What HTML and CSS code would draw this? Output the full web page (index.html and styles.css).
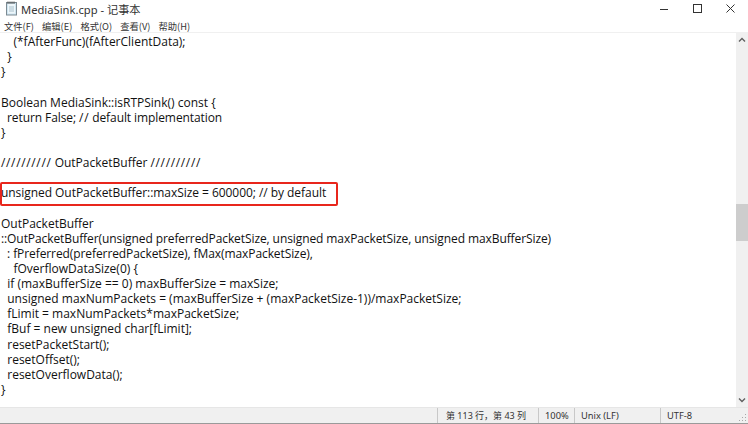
FILE: index.html
```html
<!DOCTYPE html>
<html lang="zh">
<head>
<meta charset="utf-8">
<title>MediaSink.cpp - 记事本</title>
<link rel="stylesheet" href="styles.css">
</head>
<body>
<div class="window">
  <header class="titlebar">
    <svg class="app-icon" width="14" height="15" viewBox="0 0 14 15">
      <rect x="1.5" y="1.5" width="10" height="12.5" fill="#cfe6f2" stroke="#7d8a92"/>
      <rect x="3" y="3" width="7" height="9.5" fill="#eef6fa"/>
      <path d="M3 0.5v2.5M5 0.5v2.5M7 0.5v2.5M9 0.5v2.5" stroke="#555" stroke-width="1"/>
      <path d="M4 6h5M4 8h5M4 10h5" stroke="#a8c0cc" stroke-width="1"/>
    </svg>
    <span class="title">MediaSink.cpp - 记事本</span>
    <div class="controls">
      <svg class="control" width="12" height="12" viewBox="0 0 12 12"><path d="M1 6.5h8" stroke="#333" stroke-width="1"/></svg>
      <svg class="control" width="12" height="12" viewBox="0 0 12 12"><rect x="1.5" y="1.5" width="8" height="8" fill="none" stroke="#333" stroke-width="1"/></svg>
      <svg class="control" width="12" height="12" viewBox="0 0 12 12"><path d="M1.5 1.5l8 8M9.5 1.5l-8 8" stroke="#333" stroke-width="1"/></svg>
    </div>
  </header>
  <nav class="menubar">
    <span>文件(F)</span><span>编辑(E)</span><span>格式(O)</span><span>查看(V)</span><span>帮助(H)</span>
  </nav>
  <main class="editor">
    <pre class="code">    (*fAfterFunc)(fAfterClientData);
  }
}

Boolean MediaSink::isRTPSink() const {
<span class="tight">  return False; <span class="slash">//</span> default implementation</span>
}

<span class="slash">//////////</span> OutPacketBuffer <span class="slash">//////////</span>

<span class="snug">unsigned OutPacketBuffer::maxSize = 600000; // by default</span>

OutPacketBuffer
<span class="tight">::OutPacketBuffer(unsigned preferredPacketSize, unsigned maxPacketSize, unsigned maxBufferSize)</span>
<span class="tight">  : fPreferred(preferredPacketSize), fMax(maxPacketSize),</span>
    fOverflowDataSize(0) {
  if (maxBufferSize == 0) maxBufferSize = maxSize;
  unsigned maxNumPackets = (maxBufferSize + (maxPacketSize-1))/maxPacketSize;
  fLimit = maxNumPackets*maxPacketSize;
  fBuf = new unsigned char[fLimit];
  resetPacketStart();
  resetOffset();
  resetOverflowData();
}</pre>
    <div class="highlight"></div>
    <div class="scrollbar">
      <svg class="arrow" width="12" height="14" viewBox="0 0 12 14"><path d="M3 8.5l3-3 3 3" fill="none" stroke="#606060" stroke-width="1.4"/></svg>
      <div class="track"><div class="thumb"></div></div>
      <svg class="arrow" width="12" height="14" viewBox="0 0 12 14"><path d="M3 5.5l3 3 3-3" fill="none" stroke="#606060" stroke-width="1.4"/></svg>
    </div>
  </main>
  <footer class="statusbar">
    <span class="cell pos">第 113 行，第 43 列</span>
    <span class="cell zoom">100%</span>
    <span class="cell eol">Unix (LF)</span>
    <span class="cell enc">UTF-8</span>
    <svg class="grip" width="12" height="12" viewBox="0 0 12 12"><path d="M9 3h1v1H9zM6 6h1v1H6zM9 6h1v1H9zM3 9h1v1H3zM6 9h1v1H6zM9 9h1v1H9z" fill="#a8a8a8"/></svg>
  </footer>
</div>
</body>
</html>
```
FILE: styles.css
```css
* { box-sizing: border-box; }
html, body { margin: 0; padding: 0; background: #fff; }
body { font-family: "Open Sans", "Noto Sans CJK SC", sans-serif; color: #1a1a1a; }
.window { width: 748px; height: 424px; display: flex; flex-direction: column; overflow: hidden; }
.titlebar { height: 17px; display: flex; align-items: center; padding-left: 5px; font-size: 11.2px; color: #333; flex: none; }
.app-icon { margin-right: 2px; flex: none; }
.title { flex: 1; white-space: nowrap; font-family: "Noto Sans", "Noto Sans CJK SC", sans-serif; padding-top: 1px; }
.controls { display: flex; gap: 21px; padding-right: 11px; }
.control { display: block; }
.menubar { height: 16px; display: flex; padding-left: 4px; gap: 8px; font-size: 9.3px; line-height: 18px; color: #333; flex: none; border-bottom: 1px solid #f0f0f0; font-family: "Noto Sans CJK SC", sans-serif; }
.editor { flex: 1; position: relative; display: flex; min-height: 0; }
.code { flex: 1; margin: 0; padding: 1px 0 0 1px; font-family: "Open Sans", sans-serif; font-size: 12px; line-height: 15.12px; color: #111; overflow: hidden; }
.tight { letter-spacing: -0.09px; }
.snug { letter-spacing: -0.05px; }
.slash { letter-spacing: 0.65px; }
.highlight { position: absolute; left: 0; top: 149px; width: 338px; height: 24px; border: 2px solid #e8261c; border-radius: 2px; }
.scrollbar { width: 12px; background: #f0f0f0; display: flex; flex-direction: column; flex: none; margin-right: 0; }
.arrow { display: block; flex: none; }
.track { flex: 1; padding-top: 157px; }
.thumb { height: 37px; background: #cdcdcd; }
.statusbar { height: 17px; background: #f0f0f0; border-bottom: 1px solid #9a9a9a; border-top: 1px solid #e6e6e6; display: flex; align-items: center; font-size: 9.3px; color: #333; flex: none; position: relative; font-family: "Noto Sans", "Noto Sans CJK SC", sans-serif; padding-left: 437px; }
.cell { height: 100%; border-left: 1px solid #c8c8c8; line-height: 15px; white-space: nowrap; flex: none; }
.pos { width: 101px; padding-left: 8px; font-size: 9px; }
.zoom { width: 36px; padding-left: 6px; }
.eol { width: 86px; padding-left: 6px; }
.enc { padding-left: 6px; }
.grip { position: absolute; right: 0; bottom: 0; }
```
